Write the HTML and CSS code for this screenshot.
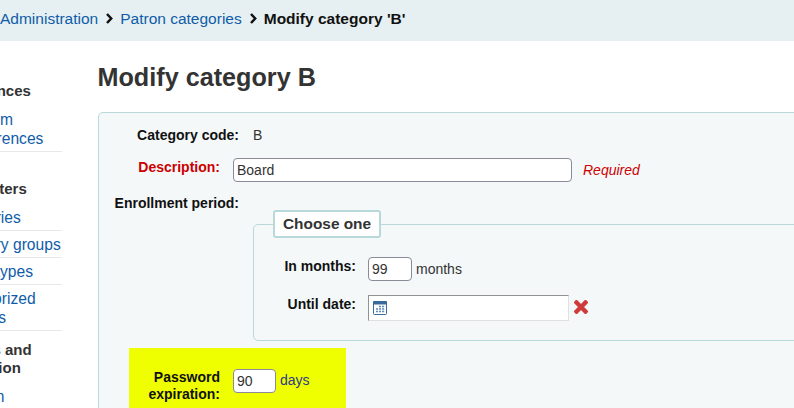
FILE: index.html
```html
<!DOCTYPE html>
<html lang="en">
<head>
    <meta charset="UTF-8">
    <title>Modify category B</title>
    <link rel="stylesheet" href="styles.css">
</head>
<body>
    <nav class="breadcrumbs">
        <a href="#">Administration</a>
        <svg class="crumb-sep" width="8" height="11" viewBox="0 0 8 11"><path d="M2 1 6.2 5.5 2 10" fill="none" stroke="#111" stroke-width="2.5"/></svg>
        <a href="#">Patron categories</a>
        <svg class="crumb-sep" width="8" height="11" viewBox="0 0 8 11"><path d="M2 1 6.2 5.5 2 10" fill="none" stroke="#111" stroke-width="2.5"/></svg>
        <strong>Modify category 'B'</strong>
    </nav>

    <div class="page">
        <aside class="sidebar">
            <h5>Preferences</h5>
            <ul>
                <li><a href="#">System preferences</a></li>
            </ul>
            <h5>Parameters</h5>
            <ul class="tight">
                <li><a href="#">Libraries</a></li>
                <li><a href="#">Library groups</a></li>
                <li><a href="#">Item types</a></li>
                <li><a href="#">Authorized values</a></li>
            </ul>
            <h5>Patrons and circulation</h5>
            <ul>
                <li><a href="#">Action</a></li>
            </ul>
        </aside>

        <main class="main">
            <h1>Modify category B</h1>
            <form class="rows">
                <div class="row row-code">
                    <span class="label label-wide">Category code:</span>
                    <span class="value">B</span>
                </div>
                <div class="row row-desc">
                    <label class="label label-narrow required" for="description">Description:</label>
                    <input class="text description" id="description" type="text" value="Board">
                    <span class="required-note">Required</span>
                </div>
                <div class="row row-enroll">
                    <span class="label label-wide">Enrollment period:</span>
                </div>
                <fieldset class="choose">
                    <legend>Choose one</legend>
                    <div class="row row-months">
                        <label class="label label-inner" for="months">In months:</label>
                        <input class="text short" id="months" type="text" value="99">
                        <span class="value">months</span>
                    </div>
                    <div class="row row-date">
                        <label class="label label-inner" for="until">Until date:</label>
                        <span class="date-wrap">
                            <input class="date" id="until" type="text">
                            <svg class="cal" width="14" height="14" viewBox="0 0 14 14">
                                <rect x="0.5" y="0.5" width="13" height="13" rx="1" fill="#fff" stroke="#3a6a9c"/>
                                <rect x="0" y="0" width="14" height="3.6" rx="1" fill="#3a6a9c"/>
                                <path d="M6 5.5h2M9 5.5h2.2M3 8h2M6 8h2M9 8h2.2M3 10.5h2M6 10.5h2M9 10.5h2.2" stroke="#5f8ab5" stroke-width="1.5"/>
                            </svg>
                        </span>
                        <svg class="clear" width="14" height="14" viewBox="0 0 14 14"><path d="M2.5 2.5 11.5 11.5M11.5 2.5 2.5 11.5" stroke="#cf3a3a" stroke-width="4.4" stroke-linecap="square"/></svg>
                    </div>
                </fieldset>
                <div class="highlight">
                    <div class="row">
                        <label class="label label-pass" for="expiry">Password expiration:</label>
                        <input class="text expiry" id="expiry" type="text" value="90">
                        <span class="value days">days</span>
                    </div>
                </div>
            </form>
        </main>
    </div>
</body>
</html>
```

FILE: styles.css
```css
html, body {
    margin: 0;
    padding: 0;
    height: 408px;
    overflow: hidden;
}
body {
    font-family: "Liberation Sans", Arial, sans-serif;
    font-size: 14px;
    color: #333;
    background-color: #fff;
}
a {
    color: #0f5ca8;
    text-decoration: none;
}
.breadcrumbs {
    box-sizing: border-box;
    display: flex;
    align-items: center;
    gap: 7px;
    height: 41px;
    padding: 0 0 4px 0;
    background-color: #e6f0f2;
    font-size: 15.5px;
    white-space: nowrap;
}
.breadcrumbs strong {
    color: #111;
}
.page {
    display: flex;
    align-items: flex-start;
    margin-left: -55px;
}
.sidebar {
    width: 117px;
    flex: none;
    padding-top: 41px;
}
.sidebar h5 {
    margin: 0 0 6px;
    font-size: 15px;
    line-height: 18px;
    color: #333;
}
.sidebar ul {
    list-style: none;
    margin: 0 0 28px;
    padding: 0 0 0 16px;
}
.sidebar ul.tight {
    margin-bottom: 10px;
}
.sidebar li {
    padding: 4px 0 3px;
    border-bottom: 1px solid #e8e8e8;
    font-size: 15.6px;
    line-height: 19px;
}
.main {
    flex: none;
    width: 760px;
    margin-left: 36px;
}
.main h1 {
    margin: 0 0 0 -0.5px;
    padding-top: 20px;
    font-size: 25.2px;
    line-height: 32px;
    color: #333;
}
.rows {
    margin-top: 19px;
    height: 400px;
    border: 1px solid #b9d8d9;
    border-radius: 5px;
    background-color: #f4f8f9;
}
.row {
    display: flex;
    align-items: flex-start;
}
.label {
    flex: none;
    font-weight: bold;
    color: #111;
    text-align: right;
    line-height: 17px;
}
.label-wide {
    width: 140px;
}
.label-narrow {
    width: 121px;
}
.label-inner {
    width: 102px;
    padding-top: 1px;
}
.label-pass {
    width: 91px;
}
.required {
    color: #cc0000;
}
.required-note {
    margin-left: 11px;
    font-style: italic;
    color: #cc0000;
    line-height: 24px;
}
.value {
    margin-left: 14px;
    line-height: 17px;
}
.row-code {
    padding-top: 14px;
}
.row-desc {
    padding-top: 14px;
}
.row-desc .label {
    padding-top: 1px;
}
.row-enroll {
    padding-top: 13px;
}
.text {
    box-sizing: border-box;
    height: 24px;
    margin: 0 0 0 13px;
    padding: 0 3px;
    border: 1px solid #8a8a99;
    border-radius: 4px;
    background-color: #fff;
    font-family: inherit;
    font-size: 14px;
    color: #333;
}
.description {
    width: 339px;
}
.short {
    width: 44px;
    margin-left: 12px;
}
.expiry {
    width: 43px;
}
.choose {
    margin: -2px 0 0 154px;
    padding: 0;
    height: 131px;
    box-sizing: border-box;
    border: 1px solid #b9d8d9;
    border-radius: 5px;
}
.choose legend {
    margin-left: 19px;
    padding: 3px 8px;
    border: 2px solid #b9d8d9;
    border-radius: 3px;
    background-color: #fff;
    font-size: 15.4px;
    font-weight: bold;
    line-height: 18px;
}
.row-months {
    padding-top: 19px;
}
.row-months .value {
    margin-left: 4px;
    line-height: 24px;
}
.row-date {
    padding-top: 14px;
}
.date-wrap {
    position: relative;
    margin-left: 12px;
}
.date {
    box-sizing: border-box;
    display: block;
    width: 201px;
    height: 26px;
    margin: 0;
    padding: 0;
    border: 1px solid #e0e0e0;
    border-top-color: #929292;
    border-left-color: #929292;
    background-color: #fff;
}
.cal {
    position: absolute;
    left: 5px;
    top: 6px;
}
.clear {
    margin: 5px 0 0 5px;
}
.highlight {
    box-sizing: border-box;
    width: 217px;
    height: 80px;
    margin: 7px 0 0 30px;
    padding-top: 21px;
    background-color: #efff00;
}
.days {
    margin-left: 4px;
    line-height: 23px;
    color: #2b3a8f;
}
```
